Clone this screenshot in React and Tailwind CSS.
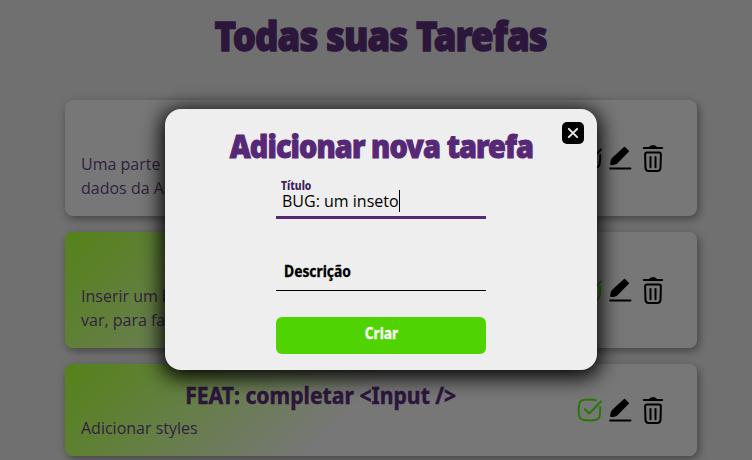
const tasks = [
  { title: '', lines: ['Uma parte da aplicação para os', 'dados da API'], done: false, height: 'h-[116px]' },
  { title: '', lines: ['Inserir um botão na navegação', 'var, para facilitar'], done: true, height: 'h-[116px]' },
  { title: 'FEAT: completar <Input />', lines: ['Adicionar styles'], done: true, height: 'h-[92px]' },
];

function CheckIcon({ done }) {
  return (
    <svg className={done ? 'text-[#287804]' : 'text-black'} width="26" height="26" viewBox="0 0 26 26" fill="none" stroke="currentColor" strokeWidth="2" strokeLinecap="round" strokeLinejoin="round">
      <path d="M19 2.3Q17 1.5 12.5 1.5Q5.5 1.5 3.7 3.2Q1.7 5 1.7 12Q1.7 19 3.7 20.8Q5.5 22.5 12.5 22.5Q19.5 22.5 21.3 20.8Q23.2 19 23.2 12V9" />
      <path d="M7.8 11.2L12.2 15.5L24 3.5" />
    </svg>
  );
}

function PencilIcon() {
  return (
    <svg width="24" height="26" viewBox="0 0 24 26" fill="black">
      <path d="M16 .9Q16.5 .5 17 .9L20.8 4.7Q21.2 5.2 20.8 5.7L9.5 17.2Q8 18.7 2.9 19.1L2.1 18.4Q2.5 13.1 4.5 11.6Z" />
      <rect x="1.2" y="21.5" width="22.2" height="2.1" rx="1" />
    </svg>
  );
}

function TrashIcon() {
  return (
    <svg width="22" height="28" viewBox="0 0 22 28" fill="none" stroke="black" strokeWidth="2" strokeLinecap="round">
      <path d="M1.8 3H20.2" />
      <path d="M7.3 2V1.5Q7.3 .9 8.5 .9L9 .2H13L13.5 .9Q14.7 .9 14.7 1.5V2" fill="black" stroke="none" />
      <path d="M5 7.5H17Q18.9 7.5 18.9 9.5L18.5 23Q18.2 26 15.4 26H6.6Q3.8 26 3.5 23L3.1 9.5Q3.1 7.5 5 7.5Z" />
      <path d="M8.5 12V22.2M13.5 12V22.2" />
    </svg>
  );
}

function TaskCard({ task }) {
  return (
    <article className={`${task.height} flex w-[632px] shrink-0 items-center rounded-lg shadow-[2px_3px_8px_rgba(0,0,0,0.4)] ${task.done ? 'bg-[linear-gradient(135deg,#558218_0%,#637f40_20%,#777777_46%)]' : 'bg-[#777777]'}`}>
      <div className="flex w-[512px] shrink-0 flex-col pl-4 pt-1">
        <h2 className="flex h-8 items-center justify-center whitespace-nowrap pb-[10px] pr-[17px] text-2xl font-bold leading-6 text-[#2c163c]">
          <span className="inline-block scale-x-[0.882] [-webkit-text-stroke:0.5px_#2c163c]">{task.title}</span>
        </h2>
        {task.lines.map((line) => (
          <p key={line} className="whitespace-nowrap font-['Open_Sans',sans-serif] text-base leading-6 text-[#321f40]">{line}</p>
        ))}
      </div>
      <div className="flex items-center pt-[2px]">
        <CheckIcon done={task.done} />
        <div className="ml-[5px]"><PencilIcon /></div>
        <div className="ml-[10px]"><TrashIcon /></div>
      </div>
    </article>
  );
}

function AddTaskModal() {
  return (
    <section className="absolute left-[165px] top-[109px] flex h-[261px] w-[432px] flex-col items-center rounded-2xl bg-[#eeeeee] shadow-[0_4px_20px_4px_rgba(0,0,0,0.95)]">
      <button className="absolute right-[13px] top-[13px] flex size-[22px] items-center justify-center rounded-[5px] bg-black">
        <svg width="12" height="12" viewBox="0 0 12 12" stroke="#eeeeee" strokeWidth="1.9" strokeLinecap="round"><path d="M1.8 1.8L10.2 10.2M10.2 1.8L1.8 10.2" /></svg>
      </button>
      <h2 className="mt-[17px] flex h-[40px] items-center justify-center whitespace-nowrap text-[32px] font-black leading-[40px] tracking-[-1px] text-[#562876]">
        <span className="inline-block scale-x-[0.9] [-webkit-text-stroke:1px_#562876]">Adicionar nova tarefa</span>
      </h2>
      <label className="mt-[13px] flex h-[40px] w-[210px] flex-col border-b-[3px] border-[#562876]">
        <span className="ml-[5px] h-[11px] origin-left scale-x-[0.86] text-xs font-extrabold leading-[13px] text-[#3c2056]">Título</span>
        <span className="ml-[6px] flex h-[22px] items-center font-['Open_Sans',sans-serif] text-base leading-[22px] text-black">
          BUG: um inseto<i className="h-[22px] w-px bg-black" />
        </span>
      </label>
      <label className="mt-[42px] flex h-[30px] w-[210px] border-b border-black pl-2 text-base font-bold leading-[20px] text-black">
        <span className="inline-block origin-left scale-x-[0.865] [-webkit-text-stroke:0.3px_black]">Descrição</span>
      </label>
      <button className="mt-[26px] flex h-[37px] w-[210px] items-center justify-center rounded-md bg-[#50d303] pb-[5px] text-base font-bold text-white">
        <span className="inline-block scale-x-[0.86] [-webkit-text-stroke:0.3px_white]">Criar</span>
      </button>
    </section>
  );
}

export default function App() {
  return (
    <main className="relative flex h-[460px] w-[752px] flex-col items-center overflow-hidden bg-[#707070] font-['Noto_Sans',sans-serif]">
      <h1 className="flex h-[100px] shrink-0 items-start justify-center whitespace-nowrap pl-[10px] pt-[5px] text-[41px] font-black leading-[60px] tracking-[-1px] text-[#2c163c]">
        <span className="inline-block scale-x-[0.89] [-webkit-text-stroke:1.4px_#2c163c]">Todas suas Tarefas</span>
      </h1>
      <div className="flex w-full flex-col gap-4 pl-[65px]">
        {tasks.map((task) => <TaskCard key={task.lines[0]} task={task} />)}
      </div>
      <AddTaskModal />
    </main>
  );
}
